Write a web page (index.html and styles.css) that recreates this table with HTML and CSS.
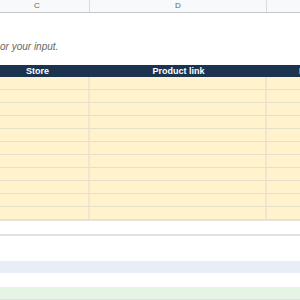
FILE: index.html
```html
<!DOCTYPE html>
<html>
<head>
<meta charset="utf-8">
<link rel="stylesheet" href="styles.css">
</head>
<body>
<div class="sheet">
  <div class="row colhead">
    <div class="cell">C</div>
    <div class="cell">D</div>
    <div class="cell"></div>
  </div>
  <div class="note">or your input.</div>
  <div class="row tablehead">
    <div class="cell">Store</div>
    <div class="cell">Product link</div>
    <div class="cell">Price</div>
  </div>
  <div class="inputs">
    <div class="row y"><div class="cell"></div><div class="cell"></div><div class="cell"></div></div>
    <div class="row y"><div class="cell"></div><div class="cell"></div><div class="cell"></div></div>
    <div class="row y"><div class="cell"></div><div class="cell"></div><div class="cell"></div></div>
    <div class="row y"><div class="cell"></div><div class="cell"></div><div class="cell"></div></div>
    <div class="row y"><div class="cell"></div><div class="cell"></div><div class="cell"></div></div>
    <div class="row y"><div class="cell"></div><div class="cell"></div><div class="cell"></div></div>
    <div class="row y"><div class="cell"></div><div class="cell"></div><div class="cell"></div></div>
    <div class="row y"><div class="cell"></div><div class="cell"></div><div class="cell"></div></div>
    <div class="row y"><div class="cell"></div><div class="cell"></div><div class="cell"></div></div>
    <div class="row y"><div class="cell"></div><div class="cell"></div><div class="cell"></div></div>
    <div class="row y"><div class="cell"></div><div class="cell"></div><div class="cell"></div></div>
  </div>
  <div class="band white1"></div>
  <div class="band gap1"></div>
  <div class="band blue"></div>
  <div class="band gap2"></div>
  <div class="band green"></div>
</div>
</body>
</html>
```
FILE: styles.css
```css
html, body {
  margin: 0;
  padding: 0;
  background: #ffffff;
  overflow: hidden;
}
body {
  width: 300px;
  height: 300px;
  font-family: "Liberation Sans", Arial, sans-serif;
}
.sheet {
  margin-left: -15px;
  width: 400px;
  display: flex;
  flex-direction: column;
}
.row {
  display: grid;
  grid-template-columns: 105px 177px 86px;
}
.colhead {
  height: 12px;
  background: #f8f9fa;
  border-bottom: 1px solid #c4c7c5;
}
.colhead .cell {
  font-size: 8px;
  line-height: 12px;
  color: #5f6368;
  text-align: center;
  border-right: 1px solid #dadce0;
}
.note {
  height: 52px;
  padding-left: 15px;
  font-size: 10px;
  font-style: italic;
  color: #666666;
  line-height: 12px;
  padding-top: 28px;
  box-sizing: border-box;
}
.tablehead {
  height: 12px;
  background: #1c3350;
}
.tablehead .cell {
  color: #ffffff;
  font-weight: bold;
  font-size: 9px;
  line-height: 12px;
  text-align: center;
}
.y {
  height: 13px;
  background: #fff2cc;
  border-bottom: 1px solid #e6dfc9;
  box-sizing: border-box;
}
.y .cell {
  border-right: 2px solid #efe6cf;
}
.white1 {
  height: 13px;
  border-top: 1px solid #e8e3d6;
  border-bottom: 2px solid #e2e2e2;
}
.gap1 {
  height: 25px;
}
.blue {
  height: 12px;
  background: #e8eef7;
}
.gap2 {
  height: 14px;
}
.green {
  height: 12px;
  background: #e6f4e6;
  border-bottom: 1px solid #d9e3d9;
}
```
